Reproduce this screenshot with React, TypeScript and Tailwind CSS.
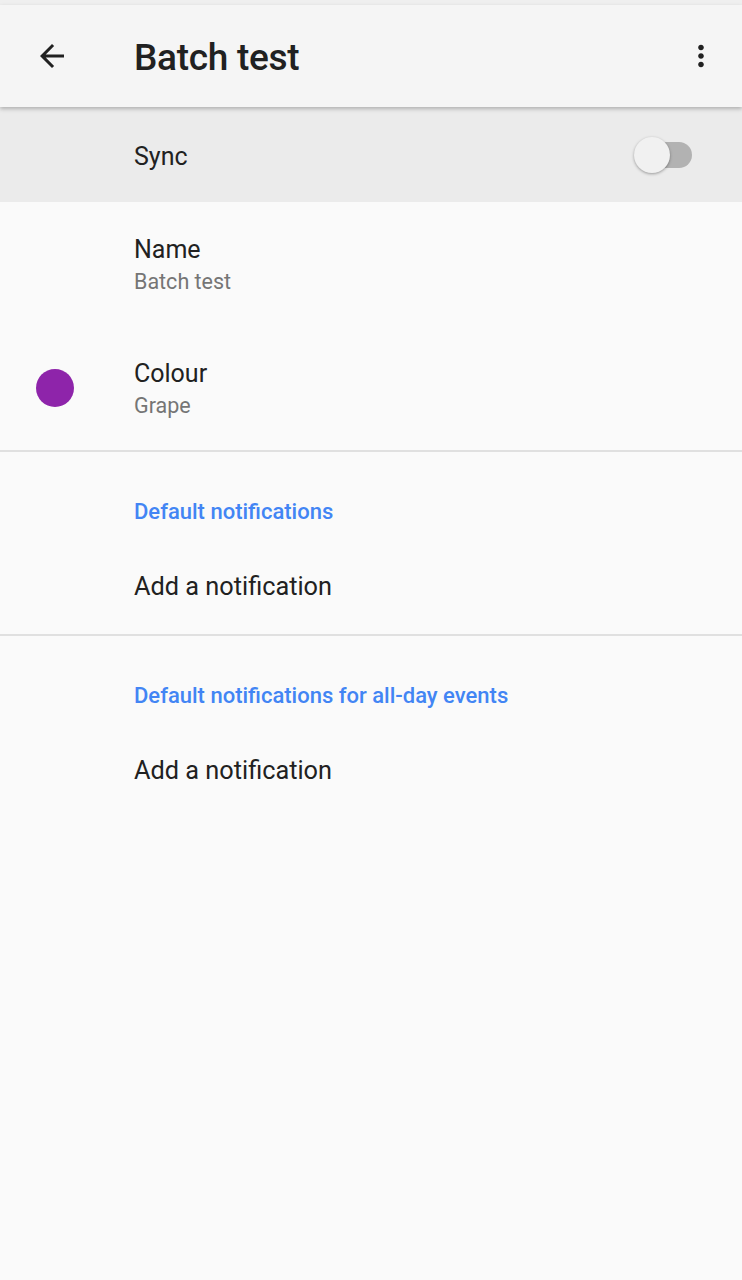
import React from "react";

const Divider = () => <div className="h-[2px] bg-[#e0e0e0]" />;

const App = () => {
  return (
    <div
      className="min-h-[1280px] bg-[#fafafa] text-[#212121]"
      style={{ fontFamily: "Roboto, 'Noto Sans', sans-serif" }}
    >
      <div className="h-[5px] bg-[#efefef]" />
      <div className="relative z-10 flex h-[102px] items-center bg-[#f5f5f5] shadow-[0_2px_4px_rgba(0,0,0,0.25)]">
        <div className="flex w-[134px] justify-start pl-[34px]">
          <svg width="36" height="36" viewBox="0 0 24 24" fill="#212121">
            <path d="M20 11H7.83l5.59-5.59L12 4l-8 8 8 8 1.41-1.41L7.83 13H20v-2z" />
          </svg>
        </div>
        <h1 className="flex-1 pt-[3px] text-[37px] font-medium tracking-[-0.3px]">Batch test</h1>
        <div className="pr-[24px]">
          <svg width="34" height="34" viewBox="0 0 24 24" fill="#212121">
            <path d="M12 8c1.1 0 2-.9 2-2s-.9-2-2-2-2 .9-2 2 .9 2 2 2zm0 2c-1.1 0-2 .9-2 2s.9 2 2 2 2-.9 2-2-.9-2-2-2zm0 6c-1.1 0-2 .9-2 2s.9 2 2 2 2-.9 2-2-.9-2-2-2z" />
          </svg>
        </div>
      </div>

      <div className="flex h-[95px] items-center bg-[#ebebeb] pl-[134px] pr-[50px]">
        <span className="flex-1 pt-[4px] text-[25px]">Sync</span>
        <div className="relative h-[26px] w-[58px]">
          <div className="absolute left-[10px] top-0 h-[26px] w-[48px] rounded-full bg-[#b2b2b2]" />
          <div className="absolute left-0 top-[-5px] h-[36px] w-[36px] rounded-full bg-[#f1f1f1] shadow-[0_1px_3px_rgba(0,0,0,0.35)]" />
        </div>
      </div>

      <div className="flex h-[124px] flex-col justify-center pl-[134px] pt-[4px]">
        <div className="text-[25px] leading-[32px]">Name</div>
        <div className="text-[21.5px] leading-[32px] text-[#757575]">Batch test</div>
      </div>

      <div className="flex h-[124px] items-center">
        <div className="flex w-[134px] pl-[36px]">
          <div className="h-[38px] w-[38px] rounded-full bg-[#8e24aa]" />
        </div>
        <div className="flex flex-col pt-[4px]">
          <div className="text-[25px] leading-[32px]">Colour</div>
          <div className="text-[21.5px] leading-[32px] text-[#757575]">Grape</div>
        </div>
      </div>

      <Divider />

      <div className="flex h-[116px] items-center pl-[134px] pt-[2px] text-[22px] font-medium text-[#4285f4]">
        Default notifications
      </div>
      <div className="flex h-[66px] items-start pl-[134px] text-[25.3px]">Add a notification</div>

      <Divider />

      <div className="flex h-[116px] items-center pl-[134px] pt-[2px] text-[22px] font-medium text-[#4285f4]">
        Default notifications for all-day events
      </div>
      <div className="flex h-[66px] items-start pl-[134px] text-[25.3px]">Add a notification</div>
    </div>
  );
};

export default App;
